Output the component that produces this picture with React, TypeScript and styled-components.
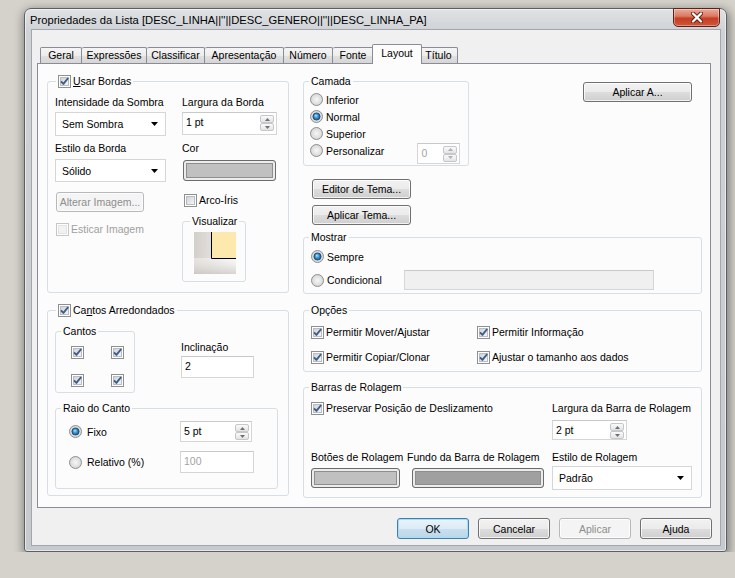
import React from 'react';
import styled, { createGlobalStyle } from 'styled-components';

const GlobalStyle = createGlobalStyle`
  html, body {
    margin: 0;
    padding: 0;
  }
  body {
    background: #d5d2cb;
    font-family: 'Liberation Sans', Arial, sans-serif;
    font-size: 10.5px;
    color: #000;
  }
  * {
    box-sizing: border-box;
  }
`;

const PANEL_BG = '#fcfcfc';

const Window = styled.div`
  margin: 8px 0 0 24px;
  width: 703px;
  height: 544px;
  border: 1px solid #5b5f65;
  border-radius: 7px 7px 3px 3px;
  background: linear-gradient(180deg, #e0e2e5 0%, #cfd2d6 22px, #c6c9cd 100%);
  box-shadow: 1px 3px 10px 2px rgba(0, 0, 0, 0.38), inset 0 0 0 1px rgba(255, 255, 255, 0.55);
  display: flex;
  flex-direction: column;
  padding-bottom: 6px;
`;

const TitleBar = styled.div`
  height: 21px;
  display: flex;
  align-items: flex-start;
  padding: 0 6px 0 5px;
`;

const TitleText = styled.div`
  flex: 1;
  font-size: 11.2px;
  line-height: 21px;
  padding-top: 1px;
  white-space: nowrap;
`;

const CloseButton = styled.div`
  width: 47px;
  height: 19px;
  margin-top: -1px;
  border: 1px solid #5d2217;
  border-radius: 0 0 5px 5px;
  background: linear-gradient(180deg, #e9ab9b 0%, #da7a62 42%, #c53e23 55%, #d0573a 100%);
  box-shadow: inset 0 0 0 1px rgba(255, 255, 255, 0.35);
  display: flex;
  align-items: center;
  justify-content: center;
`;

const Client = styled.div`
  flex: 1;
  margin: 0 6px 0 7px;
  background: #f0f0f0;
  box-shadow: 0 0 0 1px #a3a7ac;
  padding: 14px 8px 0 5px;
  display: flex;
  flex-direction: column;
`;

const TabStrip = styled.div`
  display: flex;
  align-items: flex-end;
  height: 19px;
  padding-left: 3px;
`;

const Tab = styled.div<{ $w: number; $active?: boolean; $first?: boolean }>`
  position: relative;
  z-index: ${p => (p.$active ? 2 : 1)};
  width: ${p => p.$w}px;
  height: ${p => (p.$active ? 20 : 16)}px;
  margin: ${p => (p.$active ? '0 -2px -1px' : '0')};
  border: 1px solid #898c95;
  border-bottom: none;
  border-left-width: ${p => (p.$first || p.$active ? 1 : 0)}px;
  border-radius: 2px 2px 0 0;
  background: ${p =>
    p.$active
      ? PANEL_BG
      : 'linear-gradient(180deg, #f5f5f5 0%, #ededed 50%, #e1e1e1 51%, #d6d6d6 100%)'};
  text-align: center;
  line-height: ${p => (p.$active ? 16 : 15)}px;
  white-space: nowrap;
`;

const Panel = styled.div`
  width: 674px;
  height: 445px;
  border: 1px solid #898c95;
  background: ${PANEL_BG};
  padding: 17px 0 0 9px;
  display: grid;
  grid-template-columns: 242px 399px;
  column-gap: 14px;
  align-items: start;
`;

const Column = styled.div<{ $gap?: number }>`
  display: flex;
  flex-direction: column;
  gap: ${p => p.$gap ?? 0}px;
`;

const Slot = styled.div<{ $mt?: number; $ml?: number }>`
  margin-top: ${p => p.$mt ?? 0}px;
  margin-left: ${p => p.$ml ?? 0}px;
`;

const Group = styled.div<{ $w?: number; $h: number }>`
  position: relative;
  width: ${p => (p.$w ? `${p.$w}px` : 'auto')};
  height: ${p => p.$h}px;
  border: 1px solid #d5dfe5;
  border-radius: 3px;
`;

const Legend = styled.div<{ $left?: number }>`
  position: absolute;
  top: -8px;
  left: ${p => p.$left ?? 5}px;
  padding: 0 2px;
  background: ${PANEL_BG};
  line-height: 14px;
  display: flex;
  align-items: center;
  gap: 2px;
  white-space: nowrap;
`;

const Label = styled.div`
  line-height: 14px;
  white-space: nowrap;
`;

const Row = styled.label<{ $h?: number; $gap?: number; $disabled?: boolean }>`
  display: flex;
  align-items: center;
  gap: ${p => p.$gap ?? 2}px;
  height: ${p => p.$h ?? 14}px;
  white-space: nowrap;
  color: ${p => (p.$disabled ? '#a0a0a0' : '#000')};
`;

const Field = styled.div<{ $w: number; $h: number; $disabled?: boolean; $fill?: string }>`
  width: ${p => p.$w}px;
  height: ${p => p.$h}px;
  border: 1px solid #d6d6d6;
  border-top-color: #c9c9c9;
  background: ${p => p.$fill ?? '#fff'};
  color: ${p => (p.$disabled ? '#a3a3a3' : '#000')};
  display: flex;
  align-items: flex-start;
  padding: 2px 2px 0 3px;
  line-height: 14px;
`;

const FieldText = styled.span`
  flex: 1;
`;

const SpinButtons = styled.div`
  display: flex;
  flex-direction: column;
  width: 14px;
`;

const SpinArrow = styled.div`
  height: 8px;
  border: 1px solid #c4c7cb;
  border-radius: 2px;
  background: linear-gradient(180deg, #fafafa, #e4e4e4);
  display: flex;
  align-items: center;
  justify-content: center;
`;

const Select = styled.div<{ $w: number; $h: number }>`
  width: ${p => p.$w}px;
  height: ${p => p.$h}px;
  border: 1px solid #d6d6d6;
  background: #fff;
  display: flex;
  align-items: center;
  justify-content: space-between;
  padding: 0 7px 0 6px;
`;

const Swatch = styled.div<{ $w: number; $h: number; $color: string }>`
  width: ${p => p.$w}px;
  height: ${p => p.$h}px;
  border: 1px solid #6c6c6c;
  border-radius: 3px;
  background: ${p => p.$color};
  box-shadow: inset 0 0 0 2px #ececec, inset 0 0 0 3px #8e8e8e;
`;

const Button = styled.button<{ $w: number; $h: number; $primary?: boolean; $disabled?: boolean }>`
  width: ${p => p.$w}px;
  height: ${p => p.$h}px;
  padding: 0;
  font: inherit;
  border: 1px solid ${p => (p.$primary ? '#3c7fb1' : p.$disabled ? '#b5b9bc' : '#707070')};
  border-radius: 3px;
  background: ${p =>
    p.$primary
      ? 'linear-gradient(180deg, #eaf4fb 0%, #dcebf6 50%, #c8dfef 51%, #bcd6ea 100%)'
      : p.$disabled
      ? '#f4f4f4'
      : 'linear-gradient(180deg, #f2f2f2 0%, #ebebeb 50%, #dddddd 51%, #cfcfcf 100%)'};
  box-shadow: inset 0 0 0 1px ${p => (p.$primary ? '#a8dcf5' : 'rgba(255, 255, 255, 0.75)')};
  color: ${p => (p.$disabled ? '#8d8d8d' : '#000')};
  display: flex;
  align-items: center;
  justify-content: center;
  white-space: nowrap;
`;

const U = styled.span`
  text-decoration: underline;
`;

/* group bodies */

const BordasBody = styled.div`
  display: flex;
  gap: 16px;
  padding: 13px 0 0 7px;
`;

const CantosBody = styled.div`
  display: flex;
  flex-direction: column;
  padding: 20px 0 0 7px;
`;

const CantosTop = styled.div`
  display: flex;
`;

const InclinacaoCol = styled.div`
  display: flex;
  flex-direction: column;
  margin-left: 46px;
  padding-top: 9px;
`;

const CornerGrid = styled.div`
  display: grid;
  grid-template-columns: repeat(2, 13px);
  column-gap: 27px;
  row-gap: 15px;
  padding: 14px 0 0 15px;
`;

const RaioGrid = styled.div`
  display: grid;
  grid-template-columns: 111px auto;
  row-gap: 9px;
  align-items: center;
  padding: 12px 0 0 13px;
`;

const PreviewBox = styled.div`
  padding: 10px 0 0 11px;
`;

const TopRow = styled.div`
  display: flex;
  align-items: flex-start;
`;

const CamadaBody = styled.div`
  display: flex;
  flex-direction: column;
  padding: 9px 7px 0 6px;
`;

const ApplyTo = styled.div`
  margin: 1px 10px 0 auto;
`;

const MostrarBody = styled.div`
  display: flex;
  flex-direction: column;
  gap: 5px;
  padding: 10px 0 0 7px;
`;

const CondRow = styled.div`
  display: flex;
  align-items: center;
  height: 20px;
`;

const CondLabel = styled.div`
  width: 93px;
`;

const OpcoesGrid = styled.div`
  display: grid;
  grid-template-columns: 166px auto;
  row-gap: 11px;
  padding: 14px 0 0 7px;
`;

const BarrasGrid = styled.div`
  display: grid;
  grid-template-columns: 96px 145px auto;
  row-gap: 10px;
  padding: 13px 0 0 7px;
`;

const Span2 = styled.div`
  grid-column: span 2;
`;

const Footer = styled.div`
  display: flex;
  justify-content: flex-end;
  gap: 9px;
  margin-top: 10px;
`;

/* drawings */

function CheckBox({ checked = false, disabled = false }: { checked?: boolean; disabled?: boolean }) {
  return (
    <svg width="13" height="13" viewBox="0 0 13 13" style={{ flex: 'none' }}>
      <defs>
        <linearGradient id="cbIn" x1="0" y1="0" x2="1" y2="1">
          <stop offset="0" stopColor="#cdd1d6" />
          <stop offset="1" stopColor="#f7f7f8" />
        </linearGradient>
      </defs>
      <rect x="0.5" y="0.5" width="12" height="12" fill="#fff" stroke={disabled ? '#c6c6c6' : '#8e8f8f'} />
      <rect
        x="2.5"
        y="2.5"
        width="8"
        height="8"
        fill={disabled ? '#f2f2f2' : 'url(#cbIn)'}
        stroke={disabled ? '#e2e2e2' : '#b8bdc3'}
      />
      {checked && (
        <path d="M3 6.4 L5.4 8.9 L10.2 3" fill="none" stroke="#3e5c8a" strokeWidth="1.9" strokeLinejoin="round" />
      )}
    </svg>
  );
}

function Radio({ checked = false }: { checked?: boolean }) {
  return (
    <svg width="13" height="13" viewBox="0 0 13 13" style={{ flex: 'none' }}>
      <defs>
        <radialGradient id="rdBg" cx="0.5" cy="0.5" r="0.6">
          <stop offset="0" stopColor="#f7f7f7" />
          <stop offset="1" stopColor="#cfcfcf" />
        </radialGradient>
        <radialGradient id="rdDot" cx="0.5" cy="0.5" r="0.55" fx="0.4" fy="0.35">
          <stop offset="0" stopColor="#b6e8fc" />
          <stop offset="0.55" stopColor="#2f8ccb" />
          <stop offset="1" stopColor="#164a78" />
        </radialGradient>
      </defs>
      <circle cx="6.5" cy="6.5" r="6" fill="url(#rdBg)" stroke="#8e8f8f" />
      {checked && <circle cx="6.5" cy="6.5" r="3.6" fill="url(#rdDot)" stroke="#1b466c" strokeWidth="0.8" />}
    </svg>
  );
}

function Arrow({ up = false, color = '#707070' }: { up?: boolean; color?: string }) {
  return (
    <svg width="5" height="3" viewBox="0 0 5 3">
      <path d={up ? 'M0 3 L2.5 0 L5 3 Z' : 'M0 0 L5 0 L2.5 3 Z'} fill={color} />
    </svg>
  );
}

function DropArrow() {
  return (
    <svg width="7" height="4" viewBox="0 0 7 4">
      <path d="M0 0 L7 0 L3.5 4 Z" fill="#000" />
    </svg>
  );
}

function Spin({ w, h, value, disabled }: { w: number; h: number; value: string; disabled?: boolean }) {
  return (
    <Field $w={w} $h={h} $disabled={disabled}>
      <FieldText>{value}</FieldText>
      <SpinButtons>
        <SpinArrow>
          <Arrow up color={disabled ? '#b0b0b0' : '#707070'} />
        </SpinArrow>
        <SpinArrow>
          <Arrow color={disabled ? '#b0b0b0' : '#707070'} />
        </SpinArrow>
      </SpinButtons>
    </Field>
  );
}

function Combo({ w, h, value }: { w: number; h: number; value: string }) {
  return (
    <Select $w={w} $h={h}>
      <span>{value}</span>
      <DropArrow />
    </Select>
  );
}

function Preview() {
  return (
    <svg width="42" height="42" viewBox="0 0 42 42">
      <defs>
        <linearGradient id="pvH" x1="0" y1="0" x2="1" y2="0">
          <stop offset="0" stopColor="#d3cfca" />
          <stop offset="1" stopColor="#f6f6f6" />
        </linearGradient>
        <linearGradient id="pvV" x1="0" y1="0" x2="0" y2="1">
          <stop offset="0" stopColor="#ffffff" stopOpacity="0.4" />
          <stop offset="1" stopColor="#c9c5c0" stopOpacity="0.7" />
        </linearGradient>
      </defs>
      <rect width="42" height="42" fill="url(#pvH)" />
      <rect y="26" width="42" height="16" fill="url(#pvV)" />
      <rect x="17" y="0" width="25" height="26" fill="#fde8ad" />
      <path d="M17.5 0 V26.5 H42" fill="none" stroke="#000" />
    </svg>
  );
}

function CloseGlyph() {
  return (
    <svg width="12" height="11" viewBox="0 0 12 11">
      <path d="M2 1.5 L10 9.5 M10 1.5 L2 9.5" stroke="#5a1b10" strokeWidth="4" strokeLinecap="round" />
      <path d="M2 1.5 L10 9.5 M10 1.5 L2 9.5" stroke="#fff" strokeWidth="2.4" strokeLinecap="round" />
    </svg>
  );
}

const tabs = [
  { label: 'Geral', w: 42 },
  { label: 'Expressões', w: 65 },
  { label: 'Classificar', w: 58 },
  { label: 'Apresentação', w: 79 },
  { label: 'Número', w: 49 },
  { label: 'Fonte', w: 41 },
  { label: 'Layout', w: 50, active: true },
  { label: 'Título', w: 38 },
];

function BordasGroup() {
  return (
    <Group $h={212}>
      <Legend $left={8}>
        <CheckBox checked />
        <span>
          <U>U</U>sar Bordas
        </span>
      </Legend>
      <BordasBody>
        <Column style={{ width: 111 }}>
          <Label>Intensidade da Sombra</Label>
          <Slot $mt={3}>
            <Combo w={111} h={24} value="Sem Sombra" />
          </Slot>
          <Slot $mt={5}>
            <Label>Estilo da Borda</Label>
          </Slot>
          <Slot $mt={4}>
            <Combo w={111} h={23} value="Sólido" />
          </Slot>
          <Slot $mt={10} $ml={1}>
            <Button $w={88} $h={20} $disabled>
              Alterar Imagem...
            </Button>
          </Slot>
          <Slot $mt={10} $ml={1}>
            <Row $disabled>
              <CheckBox disabled />
              <span>Esticar Imagem</span>
            </Row>
          </Slot>
        </Column>
        <Column>
          <Label>Largura da Borda</Label>
          <Slot $mt={3}>
            <Spin w={95} h={23} value="1 pt" />
          </Slot>
          <Slot $mt={6}>
            <Label>Cor</Label>
          </Slot>
          <Slot $mt={5} $ml={1}>
            <Swatch $w={93} $h={21} $color="#c0c0c0" />
          </Slot>
          <Slot $mt={12} $ml={2}>
            <Row>
              <CheckBox />
              <span>Arco-Íris</span>
            </Row>
          </Slot>
          <Slot $mt={14}>
            <Group $w={64} $h={61}>
              <Legend $left={7}>Visualizar</Legend>
              <PreviewBox>
                <Preview />
              </PreviewBox>
            </Group>
          </Slot>
        </Column>
      </BordasBody>
    </Group>
  );
}

function CantosGroup() {
  return (
    <Group $h={186}>
      <Legend $left={8}>
        <CheckBox checked />
        <span>
          Ca<U>n</U>tos Arredondados
        </span>
      </Legend>
      <CantosBody>
        <CantosTop>
          <Group $w={80} $h={62}>
            <Legend $left={5}>Cantos</Legend>
            <CornerGrid>
              <CheckBox checked />
              <CheckBox checked />
              <CheckBox checked />
              <CheckBox checked />
            </CornerGrid>
          </Group>
          <InclinacaoCol>
            <Label>Inclinação</Label>
            <Slot $mt={2}>
              <Field $w={73} $h={22}>
                2
              </Field>
            </Slot>
          </InclinacaoCol>
        </CantosTop>
        <Slot $mt={15}>
          <Group $w={223} $h={81}>
            <Legend $left={5}>Raio do Canto</Legend>
            <RaioGrid>
              <Row $gap={5}>
                <Radio checked />
                <span>Fixo</span>
              </Row>
              <Spin w={72} h={21} value="5 pt" />
              <Row $gap={5}>
                <Radio />
                <span>Relativo (%)</span>
              </Row>
              <Field $w={74} $h={22} $disabled>
                100
              </Field>
            </RaioGrid>
          </Group>
        </Slot>
      </CantosBody>
    </Group>
  );
}

function RightColumn() {
  return (
    <Column>
      <TopRow>
        <Group $w={166} $h={85}>
          <Legend>Camada</Legend>
          <CamadaBody>
            {['Inferior', 'Normal', 'Superior'].map(item => (
              <Row key={item} $h={17} $gap={3}>
                <Radio checked={item === 'Normal'} />
                <span>{item}</span>
              </Row>
            ))}
            <Row $h={17} $gap={3}>
              <Radio />
              <span>Personalizar</span>
              <Slot $ml={30} $mt={5}>
                <Spin w={43} h={21} value="0" disabled />
              </Slot>
            </Row>
          </CamadaBody>
        </Group>
        <ApplyTo>
          <Button $w={109} $h={20}>
            Aplicar A...
          </Button>
        </ApplyTo>
      </TopRow>
      <Slot $mt={13} $ml={9}>
        <Button $w={99} $h={20}>
          Editor de Tema...
        </Button>
      </Slot>
      <Slot $mt={6} $ml={9}>
        <Button $w={99} $h={20}>
          Aplicar Tema...
        </Button>
      </Slot>
      <Slot $mt={12}>
        <Group $h={57}>
          <Legend>Mostrar</Legend>
          <MostrarBody>
            <Row $h={17} $gap={3}>
              <Radio checked />
              <span>Sempre</span>
            </Row>
            <CondRow>
              <CondLabel>
                <Row $h={17} $gap={3}>
                  <Radio />
                  <span>Condicional</span>
                </Row>
              </CondLabel>
              <Field $w={250} $h={20} $fill="#f0f0f0" />
            </CondRow>
          </MostrarBody>
        </Group>
      </Slot>
      <Slot $mt={16}>
        <Group $h={62}>
          <Legend>Opções</Legend>
          <OpcoesGrid>
            {['Permitir Mover/Ajustar', 'Permitir Informação', 'Permitir Copiar/Clonar', 'Ajustar o tamanho aos dados'].map(
              item => (
                <Row key={item}>
                  <CheckBox checked />
                  <span>{item}</span>
                </Row>
              ),
            )}
          </OpcoesGrid>
        </Group>
      </Slot>
      <Slot $mt={15}>
        <Group $h={111}>
          <Legend>Barras de Rolagem</Legend>
          <BarrasGrid>
            <Span2>
              <Row>
                <CheckBox checked />
                <span>Preservar Posição de Deslizamento</span>
              </Row>
            </Span2>
            <Column>
              <Label>Largura da Barra de Rolagem</Label>
              <Slot $mt={5}>
                <Spin w={75} h={20} value="2 pt" />
              </Slot>
            </Column>
            <Column>
              <Label>Botões de Rolagem</Label>
              <Slot $mt={4}>
                <Swatch $w={89} $h={20} $color="#c0c0c0" />
              </Slot>
            </Column>
            <Column>
              <Label>Fundo da Barra de Rolagem</Label>
              <Slot $mt={4} $ml={5}>
                <Swatch $w={132} $h={20} $color="#a0a0a0" />
              </Slot>
            </Column>
            <Column>
              <Label>Estilo de Rolagem</Label>
              <Slot $mt={2}>
                <Combo w={140} h={24} value="Padrão" />
              </Slot>
            </Column>
          </BarrasGrid>
        </Group>
      </Slot>
    </Column>
  );
}

export default function App() {
  return (
    <>
      <GlobalStyle />
      <Window>
        <TitleBar>
          <TitleText>Propriedades da Lista [DESC_LINHA||''||DESC_GENERO||''||DESC_LINHA_PA]</TitleText>
          <CloseButton>
            <CloseGlyph />
          </CloseButton>
        </TitleBar>
        <Client>
          <TabStrip>
            {tabs.map((t, i) => (
              <Tab key={t.label} $w={t.w} $active={t.active} $first={i === 0}>
                {t.label}
              </Tab>
            ))}
          </TabStrip>
          <Panel>
            <Column $gap={17}>
              <BordasGroup />
              <CantosGroup />
            </Column>
            <RightColumn />
          </Panel>
          <Footer>
            <Button $w={72} $h={21} $primary>
              OK
            </Button>
            <Button $w={72} $h={21}>
              Cancelar
            </Button>
            <Button $w={72} $h={21} $disabled>
              Aplicar
            </Button>
            <Button $w={72} $h={21}>
              Ajuda
            </Button>
          </Footer>
        </Client>
      </Window>
    </>
  );
}
